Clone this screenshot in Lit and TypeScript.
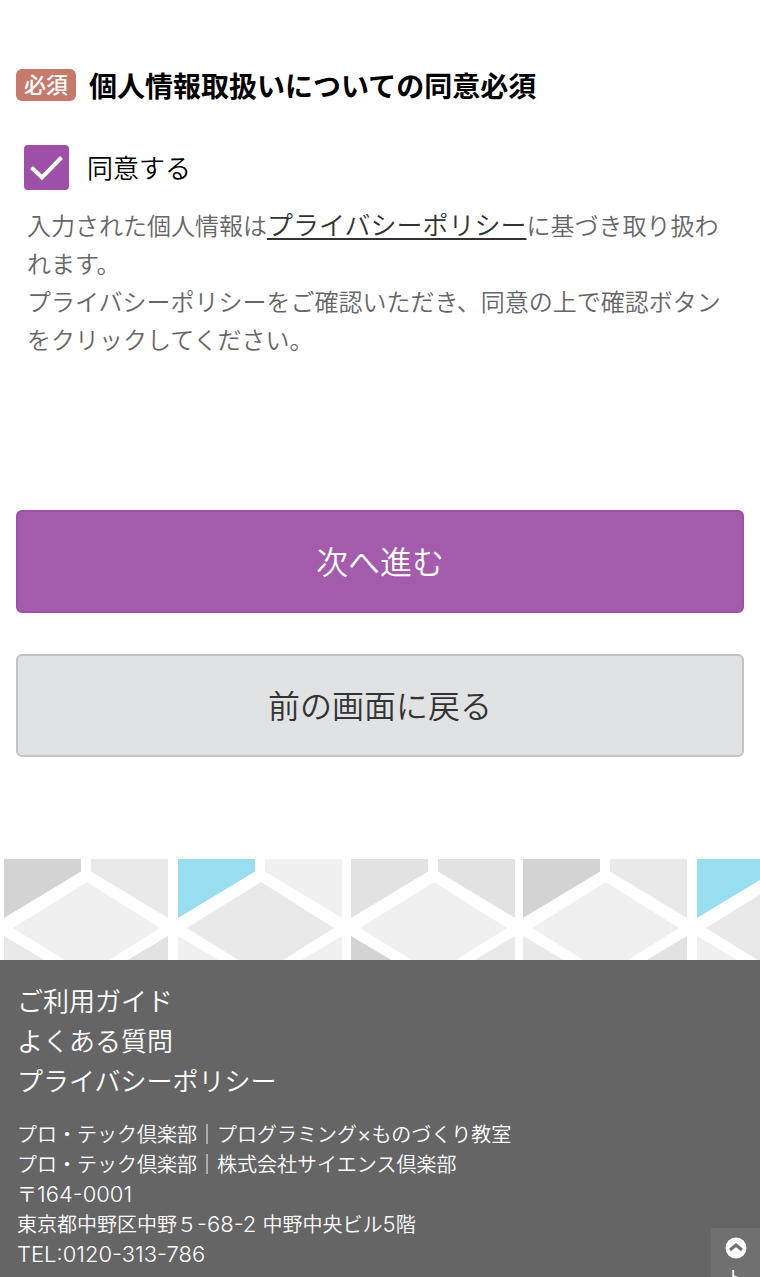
import { LitElement, html, css, svg } from "lit";
import { customElement, state } from "lit/decorators.js";

interface Tile {
  x: number;
  topLeft: string;
  topRight: string;
  diamond: string;
  bottomLeft: string;
  bottomRight: string;
}

const TILES: Tile[] = [
  { x: 0, topLeft: "#d3d3d3", topRight: "#e9e9e9", diamond: "#f0f0f0", bottomLeft: "#e9e9e9", bottomRight: "#e2e2e2" },
  { x: 174, topLeft: "#98def0", topRight: "#f0f0f0", diamond: "#e9e9e9", bottomLeft: "#f0f0f0", bottomRight: "#f0f0f0" },
  { x: 347, topLeft: "#e2e2e2", topRight: "#e2e2e2", diamond: "#f0f0f0", bottomLeft: "#d3d3d3", bottomRight: "#e9e9e9" },
];

@customElement("cube-band")
export class CubeBand extends LitElement {
  static styles = css`
    :host {
      display: block;
    }
    .band {
      display: block;
      width: 100%;
      height: 101px;
    }
  `;

  render() {
    return html`
      <svg class="band" aria-hidden="true">
        <defs>
          <pattern id="cubes" x="4" y="0" width="519" height="102" patternUnits="userSpaceOnUse">
            ${TILES.map(
              (t) => svg`
                <g transform="translate(${t.x} 0)">
                  <path fill=${t.topLeft} d="M0 0H77V12.5L0 59Z" />
                  <path fill=${t.topRight} d="M87 0H164V59L87 12.5Z" />
                  <path fill=${t.diamond} d="M83 23L156 69L83 115L9 69Z" />
                  <path fill=${t.bottomLeft} d="M0 77L42 102H0Z" />
                  <path fill=${t.bottomRight} d="M164 77V102H122Z" />
                </g>
              `
            )}
          </pattern>
        </defs>
        <rect width="100%" height="102" fill="url(#cubes)" />
      </svg>
    `;
  }
}

@customElement("app-root")
export class AppRoot extends LitElement {
  @state() private agreed = true;

  static styles = css`
    :host {
      display: flex;
      flex-direction: column;
      min-height: 100vh;
      background: #fff;
      color: #000;
      font-family: "Noto Sans CJK JP", sans-serif;
      font-weight: 350;
    }
    .form {
      display: flex;
      flex-direction: column;
      padding: 64px 16px 102px;
    }
    .heading {
      display: flex;
      align-items: center;
      gap: 13px;
      margin: 0;
      font-size: 28px;
      line-height: 42px;
      font-weight: 700;
    }
    .badge {
      padding: 0 8px 4px;
      border-radius: 6px;
      background: #c67a6b;
      color: #fff;
      font-size: 22px;
      line-height: 28px;
      font-weight: 500;
    }
    .agree {
      display: flex;
      align-items: center;
      gap: 18px;
      margin: 39px 8px 0;
      font-size: 26px;
      line-height: 45px;
    }
    .agree-text {
      padding-bottom: 2px;
      line-height: 43px;
    }
    .check {
      appearance: none;
      flex: none;
      width: 45px;
      height: 45px;
      margin: 0;
      border: 2px solid #9e4fa8;
      border-radius: 4px;
      background: #fff;
    }
    .check:checked {
      background: #9e4fa8;
    }
    .box {
      display: grid;
    }
    .box > * {
      grid-area: 1 / 1;
    }
    .tick {
      width: 45px;
      height: 45px;
      pointer-events: none;
    }
    .note {
      margin: 16px 11px 0;
      color: #666;
      font-size: 24px;
      line-height: 38px;
    }
    .note-link {
      color: #333;
      font-size: 26px;
      line-height: 1;
      text-decoration: underline;
      text-decoration-thickness: 2px;
      text-underline-offset: 3px;
    }
    .actions {
      display: flex;
      flex-direction: column;
      gap: 41px;
      margin-top: 152px;
    }
    .button {
      width: 100%;
      height: 103px;
      padding: 0 0 3px;
      border: 2px solid #9c52a4;
      border-radius: 6px;
      background: #a55bac;
      color: #fff;
      font: inherit;
      font-size: 32px;
    }
    .secondary {
      border-color: #c1c3c6;
      background: #e1e2e4;
      color: #333;
    }
    .footer {
      flex: 1;
      box-sizing: border-box;
      padding: 20px 17px 8px;
      background: #656565;
      color: #fff;
    }
    .links {
      display: flex;
      flex-direction: column;
      align-items: flex-start;
      margin: 0;
      padding: 0;
      list-style: none;
      font-size: 26px;
      line-height: 40px;
    }
    .footer-link {
      color: inherit;
      text-decoration: none;
    }
    .address {
      display: flex;
      flex-direction: column;
      margin-top: 19px;
      font-style: normal;
      font-size: 20px;
      line-height: 30px;
    }
    .latin {
      font-family: Inter, "Noto Sans CJK JP", sans-serif;
      font-size: 22px;
      font-weight: 300;
      line-height: 1;
    }
    .to-top {
      position: fixed;
      right: 0;
      bottom: 0;
      display: flex;
      flex-direction: column;
      align-items: center;
      gap: 7px;
      width: 49px;
      height: 49px;
      padding: 9px 0 0;
      border: 0;
      overflow: hidden;
      background: #707070;
      color: #fff;
      font: inherit;
      font-size: 20px;
      line-height: 24px;
    }
    .to-top-icon {
      flex: none;
      width: 22px;
      height: 22px;
    }
  `;

  private onToggle(e: Event) {
    this.agreed = (e.target as HTMLInputElement).checked;
  }

  render() {
    return html`
      <form class="form" @submit=${(e: Event) => e.preventDefault()}>
        <h2 class="heading"><span class="badge">必須</span><span>個人情報取扱いについての同意必須</span></h2>
        <label class="agree">
          <span class="box">
            <input class="check" type="checkbox" .checked=${this.agreed} @change=${this.onToggle} />
            <svg class="tick" viewBox="0 0 45 45" aria-hidden="true">
              <path d="M7.5 22.5L18 32.5L37.5 12.5" fill="none" stroke="#fff" stroke-width="4" />
            </svg>
          </span>
          <span class="agree-text">同意する</span>
        </label>
        <p class="note">
          入力された個人情報は<a class="note-link" href="#privacy">プライバシーポリシー</a>に基づき取り扱われます。<br />プライバシーポリシーをご確認いただき、同意の上で確認ボタンをクリックしてください。
        </p>
        <div class="actions">
          <button class="button" type="submit">次へ進む</button>
          <button class="button secondary" type="button">前の画面に戻る</button>
        </div>
      </form>
      <cube-band></cube-band>
      <footer class="footer">
        <ul class="links">
          <li><a class="footer-link" href="#guide">ご利用ガイド</a></li>
          <li><a class="footer-link" href="#faq">よくある質問</a></li>
          <li><a class="footer-link" href="#privacy">プライバシーポリシー</a></li>
        </ul>
        <address class="address">
          <span>プロ・テック倶楽部｜プログラミング<span class="latin">×</span>ものづくり教室</span>
          <span>プロ・テック倶楽部｜株式会社サイエンス倶楽部</span>
          <span>〒<span class="latin">164-0001</span></span>
          <span>東京都中野区中野５<span class="latin">-68-2 </span>中野中央ビル<span class="latin">5</span>階</span>
          <span class="tel">
            <span class="latin">TEL:0120-313-786</span>
          </span>
        </address>
      </footer>
      <button class="to-top" type="button">
        <svg class="to-top-icon" viewBox="0 0 22 22" aria-hidden="true">
          <circle cx="11" cy="11" r="10.5" fill="#fff" />
          <path d="M5 13L11 8L17 13" fill="none" stroke="#707070" stroke-width="3" />
        </svg>
        <span>ト</span>
      </button>
    `;
  }
}
